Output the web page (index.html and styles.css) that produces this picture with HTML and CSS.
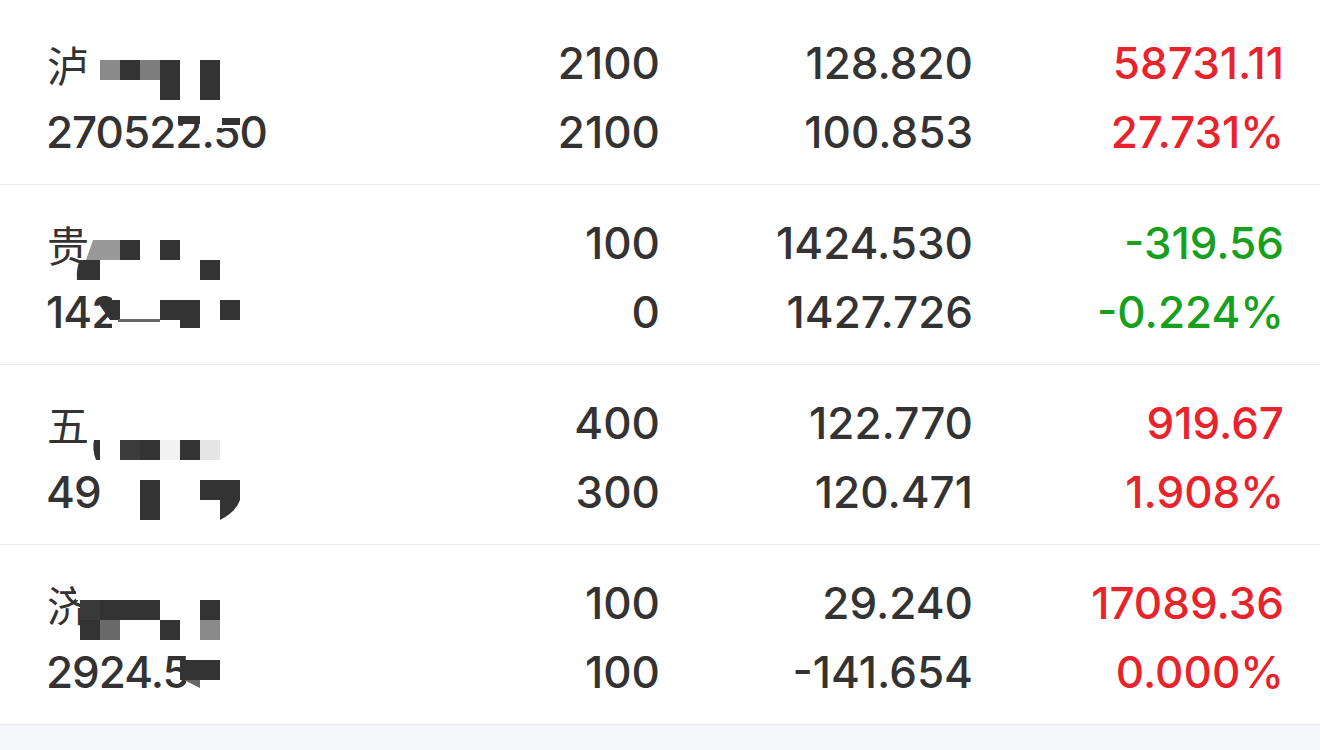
FILE: index.html
```html
<!DOCTYPE html>
<html lang="zh-CN">
<head>
<meta charset="utf-8">
<title>持仓</title>
<link rel="stylesheet" href="styles.css">
</head>
<body>
<div class="list">
  <div class="row">
    <div class="name">
      <div class="cn">泸</div>
      <div class="num">270522.50</div>
      <svg class="mosaic" viewBox="0 5 260 180" width="260" height="180">
        <rect x="100" y="60" width="20" height="20" fill="#8a8a8a"/>
        <rect x="120" y="60" width="20" height="20" fill="#333"/>
        <rect x="140" y="60" width="20" height="20" fill="#7d7d7d"/>
        <rect x="160" y="60" width="20" height="40" fill="#333"/>
        <rect x="200" y="60" width="20" height="40" fill="#333"/>
        <rect x="178" y="116" width="22" height="8" fill="#333"/>
        <rect x="214" y="114" width="26" height="14" fill="#fff"/>
        <rect x="222" y="118" width="18" height="7" fill="#333"/>
      </svg>
    </div>
    <div class="cell">2100<br>2100</div>
    <div class="cell">128.820<br>100.853</div>
    <div class="cell up">58731.11<br>27.731%</div>
  </div>
  <div class="row">
    <div class="name">
      <div class="cn">贵</div>
      <div class="num">142</div>
      <svg class="mosaic" viewBox="0 185 260 180" width="260" height="180">
        <polygon points="93,240 120,240 120,260 86,260" fill="#999"/>
        <rect x="120" y="240" width="20" height="20" fill="#333"/>
        <rect x="160" y="240" width="20" height="20" fill="#333"/>
        <path d="M80 260 H100 V280 H77 Q76 268 80 260 Z" fill="#333"/>
        <rect x="200" y="260" width="20" height="20" fill="#333"/>
        <rect x="112" y="296" width="50" height="34" fill="#fff"/>
        <polygon points="96,300 120,300 120,320 110,320" fill="#333"/>
        <rect x="160" y="300" width="40" height="20" fill="#333"/>
        <rect x="180" y="320" width="20" height="8" fill="#333"/>
        <rect x="220" y="300" width="20" height="20" fill="#333"/>
        <rect x="118" y="319" width="42" height="3" fill="#666"/>
      </svg>
    </div>
    <div class="cell">100<br>0</div>
    <div class="cell">1424.530<br>1427.726</div>
    <div class="cell down">-319.56<br>-0.224%</div>
  </div>
  <div class="row">
    <div class="name">
      <div class="cn">五</div>
      <div class="num">49</div>
      <svg class="mosaic" viewBox="0 365 260 180" width="260" height="180">
        <path d="M94 440 H100 V460 H96 Q92 450 94 440 Z" fill="#333"/>
        <rect x="120" y="440" width="20" height="20" fill="#3c3c3c"/>
        <rect x="140" y="440" width="20" height="20" fill="#333"/>
        <rect x="160" y="440" width="20" height="20" fill="#f2f2f2"/>
        <rect x="180" y="440" width="20" height="20" fill="#333"/>
        <rect x="200" y="440" width="20" height="20" fill="#e5e5e5"/>
        <rect x="140" y="480" width="20" height="40" fill="#333"/>
        <rect x="200" y="480" width="40" height="20" fill="#333"/>
        <path d="M220 500 H240 Q236 512 220 520 Z" fill="#333"/>
      </svg>
    </div>
    <div class="cell">400<br>300</div>
    <div class="cell">122.770<br>120.471</div>
    <div class="cell up">919.67<br>1.908%</div>
  </div>
  <div class="row">
    <div class="name">
      <div class="cn">济</div>
      <div class="num">2924.5</div>
      <svg class="mosaic" viewBox="0 545 260 180" width="260" height="180">
        <rect x="76" y="575" width="30" height="25" fill="#fff"/>
        <rect x="80" y="600" width="20" height="20" fill="#3a3a3a"/>
        <rect x="100" y="600" width="60" height="20" fill="#333"/>
        <rect x="200" y="600" width="20" height="20" fill="#333"/>
        <rect x="80" y="620" width="20" height="20" fill="#333"/>
        <rect x="100" y="620" width="20" height="20" fill="#6a6a6a"/>
        <rect x="160" y="620" width="20" height="20" fill="#333"/>
        <rect x="200" y="620" width="20" height="20" fill="#8a8a8a"/>
        <rect x="186" y="655" width="60" height="35" fill="#fff"/>
        <rect x="180" y="660" width="40" height="20" fill="#333"/>
        <polygon points="184,680 200,680 200,688" fill="#666"/>
      </svg>
    </div>
    <div class="cell">100<br>100</div>
    <div class="cell">29.240<br>-141.654</div>
    <div class="cell up">17089.36<br>0.000%</div>
  </div>
</div>
<div class="footer"></div>
</body>
</html>
```
FILE: styles.css
```css
html, body {
  margin: 0;
  padding: 0;
  background: #f4f6f9;
}
body {
  font-family: Inter, "Noto Sans CJK SC", sans-serif;
  color: #333;
  width: 1320px;
  height: 750px;
  overflow: hidden;
}
.list {
  background: #fff;
  padding-top: 5px;
}
.row {
  position: relative;
  display: grid;
  grid-template-columns: 314px 300px 313px 311px;
  padding: 24px 36px 17px 46px;
  height: 180px;
  box-sizing: border-box;
  border-bottom: 1px solid #e8e9eb;
  line-height: 69px;
  font-size: 44px;
  font-weight: 500;
}
.name {
  display: flex;
  flex-direction: column;
}
.num {
  letter-spacing: -1px;
}
.cn {
  font-family: "Noto Sans CJK SC", sans-serif;
  font-weight: 400;
  font-size: 42px;
  padding-left: 1px;
}
.cell {
  text-align: right;
}
.up { color: #e8232b; }
.down { color: #17a01d; }
.mosaic {
  position: absolute;
  left: 0;
  top: 0;
}
.footer {
  height: 30px;
}
```
